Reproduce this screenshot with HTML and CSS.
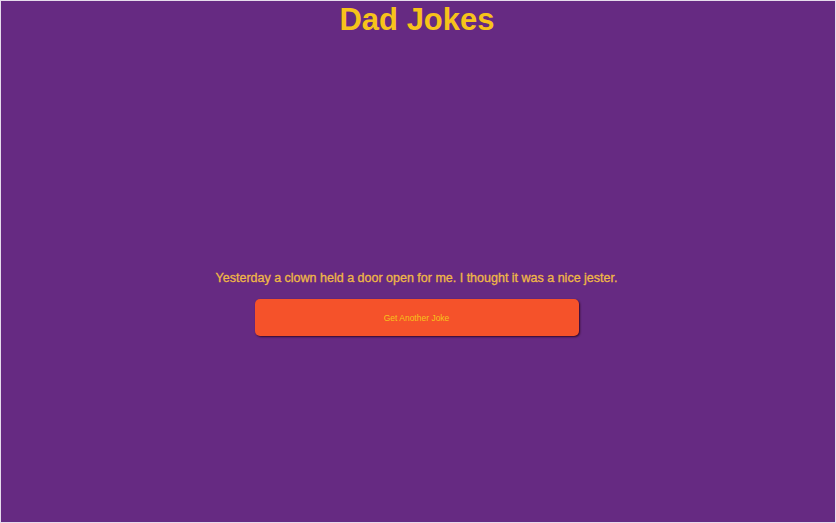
FILE: index.html
```html
<!DOCTYPE html>
<html>
<head>
<meta charset="utf-8">
<link rel="stylesheet" href="styles.css">
</head>
<body>
<div class="page">
  <h1 class="title">Dad Jokes</h1>
  <div class="joke-box">
    <p class="joke">Yesterday a clown held a door open for me. I thought it was a nice jester.</p>
    <button class="btn">Get Another Joke</button>
  </div>
</div>
</body>
</html>
```
FILE: styles.css
```css
html, body {
  margin: 0;
  padding: 0;
  background: #ece6f0;
}
.page {
  box-sizing: border-box;
  height: 523px;
  margin: 0;
  border: 1px solid #e6dcec;
  background: #662a82;
  font-family: "Liberation Sans", Arial, sans-serif;
  display: flex;
  flex-direction: column;
  align-items: center;
}
.title {
  margin: 1px 2px 0 0;
  font-size: 31px;
  line-height: 36px;
  font-weight: bold;
  color: #f7c31a;
}
.joke-box {
  margin-top: 233px;
  padding-right: 3px;
  display: flex;
  flex-direction: column;
  align-items: center;
}
.joke {
  margin: 0;
  font-size: 12.5px;
  line-height: 15px;
  font-weight: normal;
  color: #f0b846;
  -webkit-text-stroke: 0.3px #f0b846;
}
.btn {
  margin-top: 13px;
  width: 324px;
  height: 37px;
  border: none;
  border-radius: 5px;
  background: #f5522a;
  color: #f7c31a;
  font-family: "Liberation Sans", Arial, sans-serif;
  font-size: 8.5px;
  box-shadow: 1px 1px 2px rgba(40, 0, 20, 0.8);
  cursor: pointer;
}
```
